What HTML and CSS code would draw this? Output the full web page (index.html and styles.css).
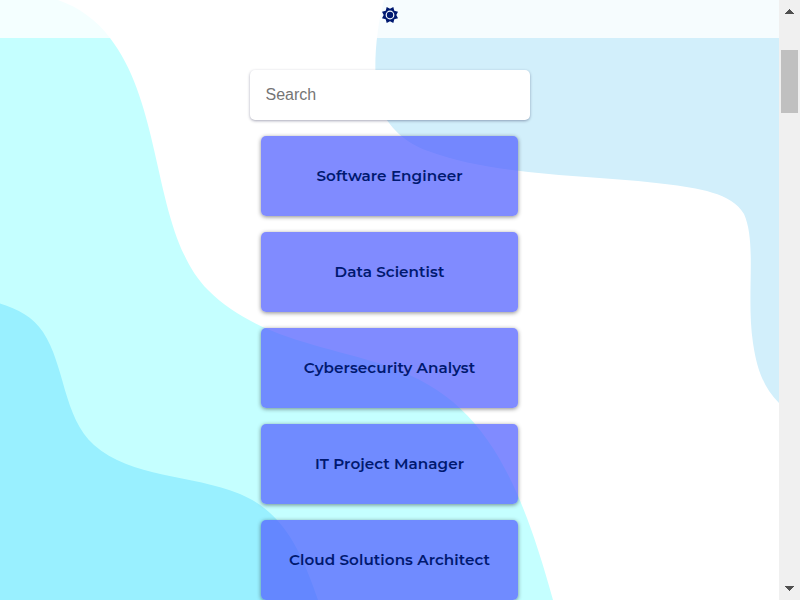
FILE: index.html
```html
<!DOCTYPE html>
<html lang="en">
<head>
<meta charset="utf-8">
<title>Careers</title>
<link rel="stylesheet" href="styles.css">
</head>
<body>
<div class="page">
  <svg class="backdrop" viewBox="0 0 779 600" aria-hidden="true">
    <path fill="#c5ffff" d="M0 -20L58 0C78 7 97 20 110 38C165 109 152 234 208 290C258 340 331 346 390 367C477 398 515 462 553 600H0Z"/>
    <path fill="#99f0ff" d="M0 303.500C18 309 33 317 43 332C65 365 63 417 94 445C131 478 191 474 240 494C283 512 301 550 318 600H0Z"/>
    <path fill="#d2effb" d="M384 0C375 32 372 82 380 106C388 128 406 143 428 151C498 177 595 175 665 184C698 188 732 193 744 214C757 243 746 296 753 343C757 370 764 388 779 403V0Z"/>
  </svg>
  <header class="topbar">
    <svg class="gear" viewBox="0 0 16 16" aria-label="Theme">
      <path fill="#001970" fill-rule="evenodd" d="M4.700 0L8 1.700L11.300 0L12.300 3.700L16 4.700L14.300 8L16 11.300L12.300 12.300L11.300 16L8 14.300L4.700 16L3.700 12.300L0 11.300L1.700 8L0 4.700L3.700 3.700ZM8 3.600A4.400 4.400 0 1 0 8 12.400A4.400 4.400 0 1 0 8 3.600Z"/>
      <circle cx="8" cy="8" r="3.200" fill="#001970"/>
    </svg>
  </header>
  <main class="content">
    <input class="search" type="text" placeholder="Search">
    <div class="list">
      <button class="card">Software Engineer</button>
      <button class="card">Data Scientist</button>
      <button class="card">Cybersecurity Analyst</button>
      <button class="card">IT Project Manager</button>
      <button class="card">Cloud Solutions Architect</button>
    </div>
  </main>
</div>
<div class="scrollbar">
  <svg class="arrow" viewBox="0 0 9 5" shape-rendering="crispEdges"><path d="M4 0h1v1h1v1h1v1h1v1h1v1H0V4h1V3h1V2h1V1h1z"/></svg>
  <div class="thumb"></div>
  <svg class="arrow down" viewBox="0 0 9 5" shape-rendering="crispEdges"><path d="M0 0h9v1H8v1H7v1H6v1H5v1H4V4H3V3H2V2H1V1H0z"/></svg>
</div>
</body>
</html>
```
FILE: styles.css
```css
* { box-sizing: border-box; }
body {
  margin: 0;
  height: 600px;
  overflow: hidden;
  display: flex;
  background: #fff;
}
.page {
  position: relative;
  width: 779px;
  height: 600px;
  overflow: hidden;
}
.backdrop {
  position: absolute;
  inset: 0;
  width: 779px;
  height: 600px;
}
.topbar {
  position: relative;
  height: 38px;
  padding-top: 7px;
  display: flex;
  justify-content: center;
  align-items: flex-start;
  background: rgba(255, 255, 255, .8);
}
.gear { width: 16px; height: 16px; margin-left: 1px; }
.content {
  position: relative;
  display: flex;
  flex-direction: column;
  align-items: center;
  padding-top: 32px;
}
.search {
  width: 280px;
  height: 50px;
  margin-left: 1px;
  padding: 0 15.5px;
  border: 0;
  border-radius: 5px;
  background: #fff;
  box-shadow: 0 1px 3px rgba(0, 0, 50, .35);
  font: 16px "Liberation Sans", sans-serif;
}
.search::placeholder { color: #757575; }
.list {
  display: flex;
  flex-direction: column;
  gap: 16px;
  margin-top: 16px;
}
.card {
  width: 257px;
  height: 80px;
  padding: 0 0 2px;
  border: 0;
  border-radius: 5px;
  background: rgba(79, 94, 255, .72);
  box-shadow: 0 1px 4px rgba(0, 0, 0, .45);
  color: #001970;
  font: 600 15.2px Montserrat, Inter, sans-serif;
  letter-spacing: .06px;
  white-space: nowrap;
}
.scrollbar {
  width: 21px;
  height: 600px;
  padding: 9px 2px 9px 2px;
  display: flex;
  flex-direction: column;
  align-items: center;
  background: #f0f0f0;
}
.arrow { width: 9px; height: 5px; fill: #505050; }
.thumb {
  width: 17px;
  height: 63px;
  margin-top: 36px;
  background: #c0c0c0;
}
.down { margin-top: auto; }
```
